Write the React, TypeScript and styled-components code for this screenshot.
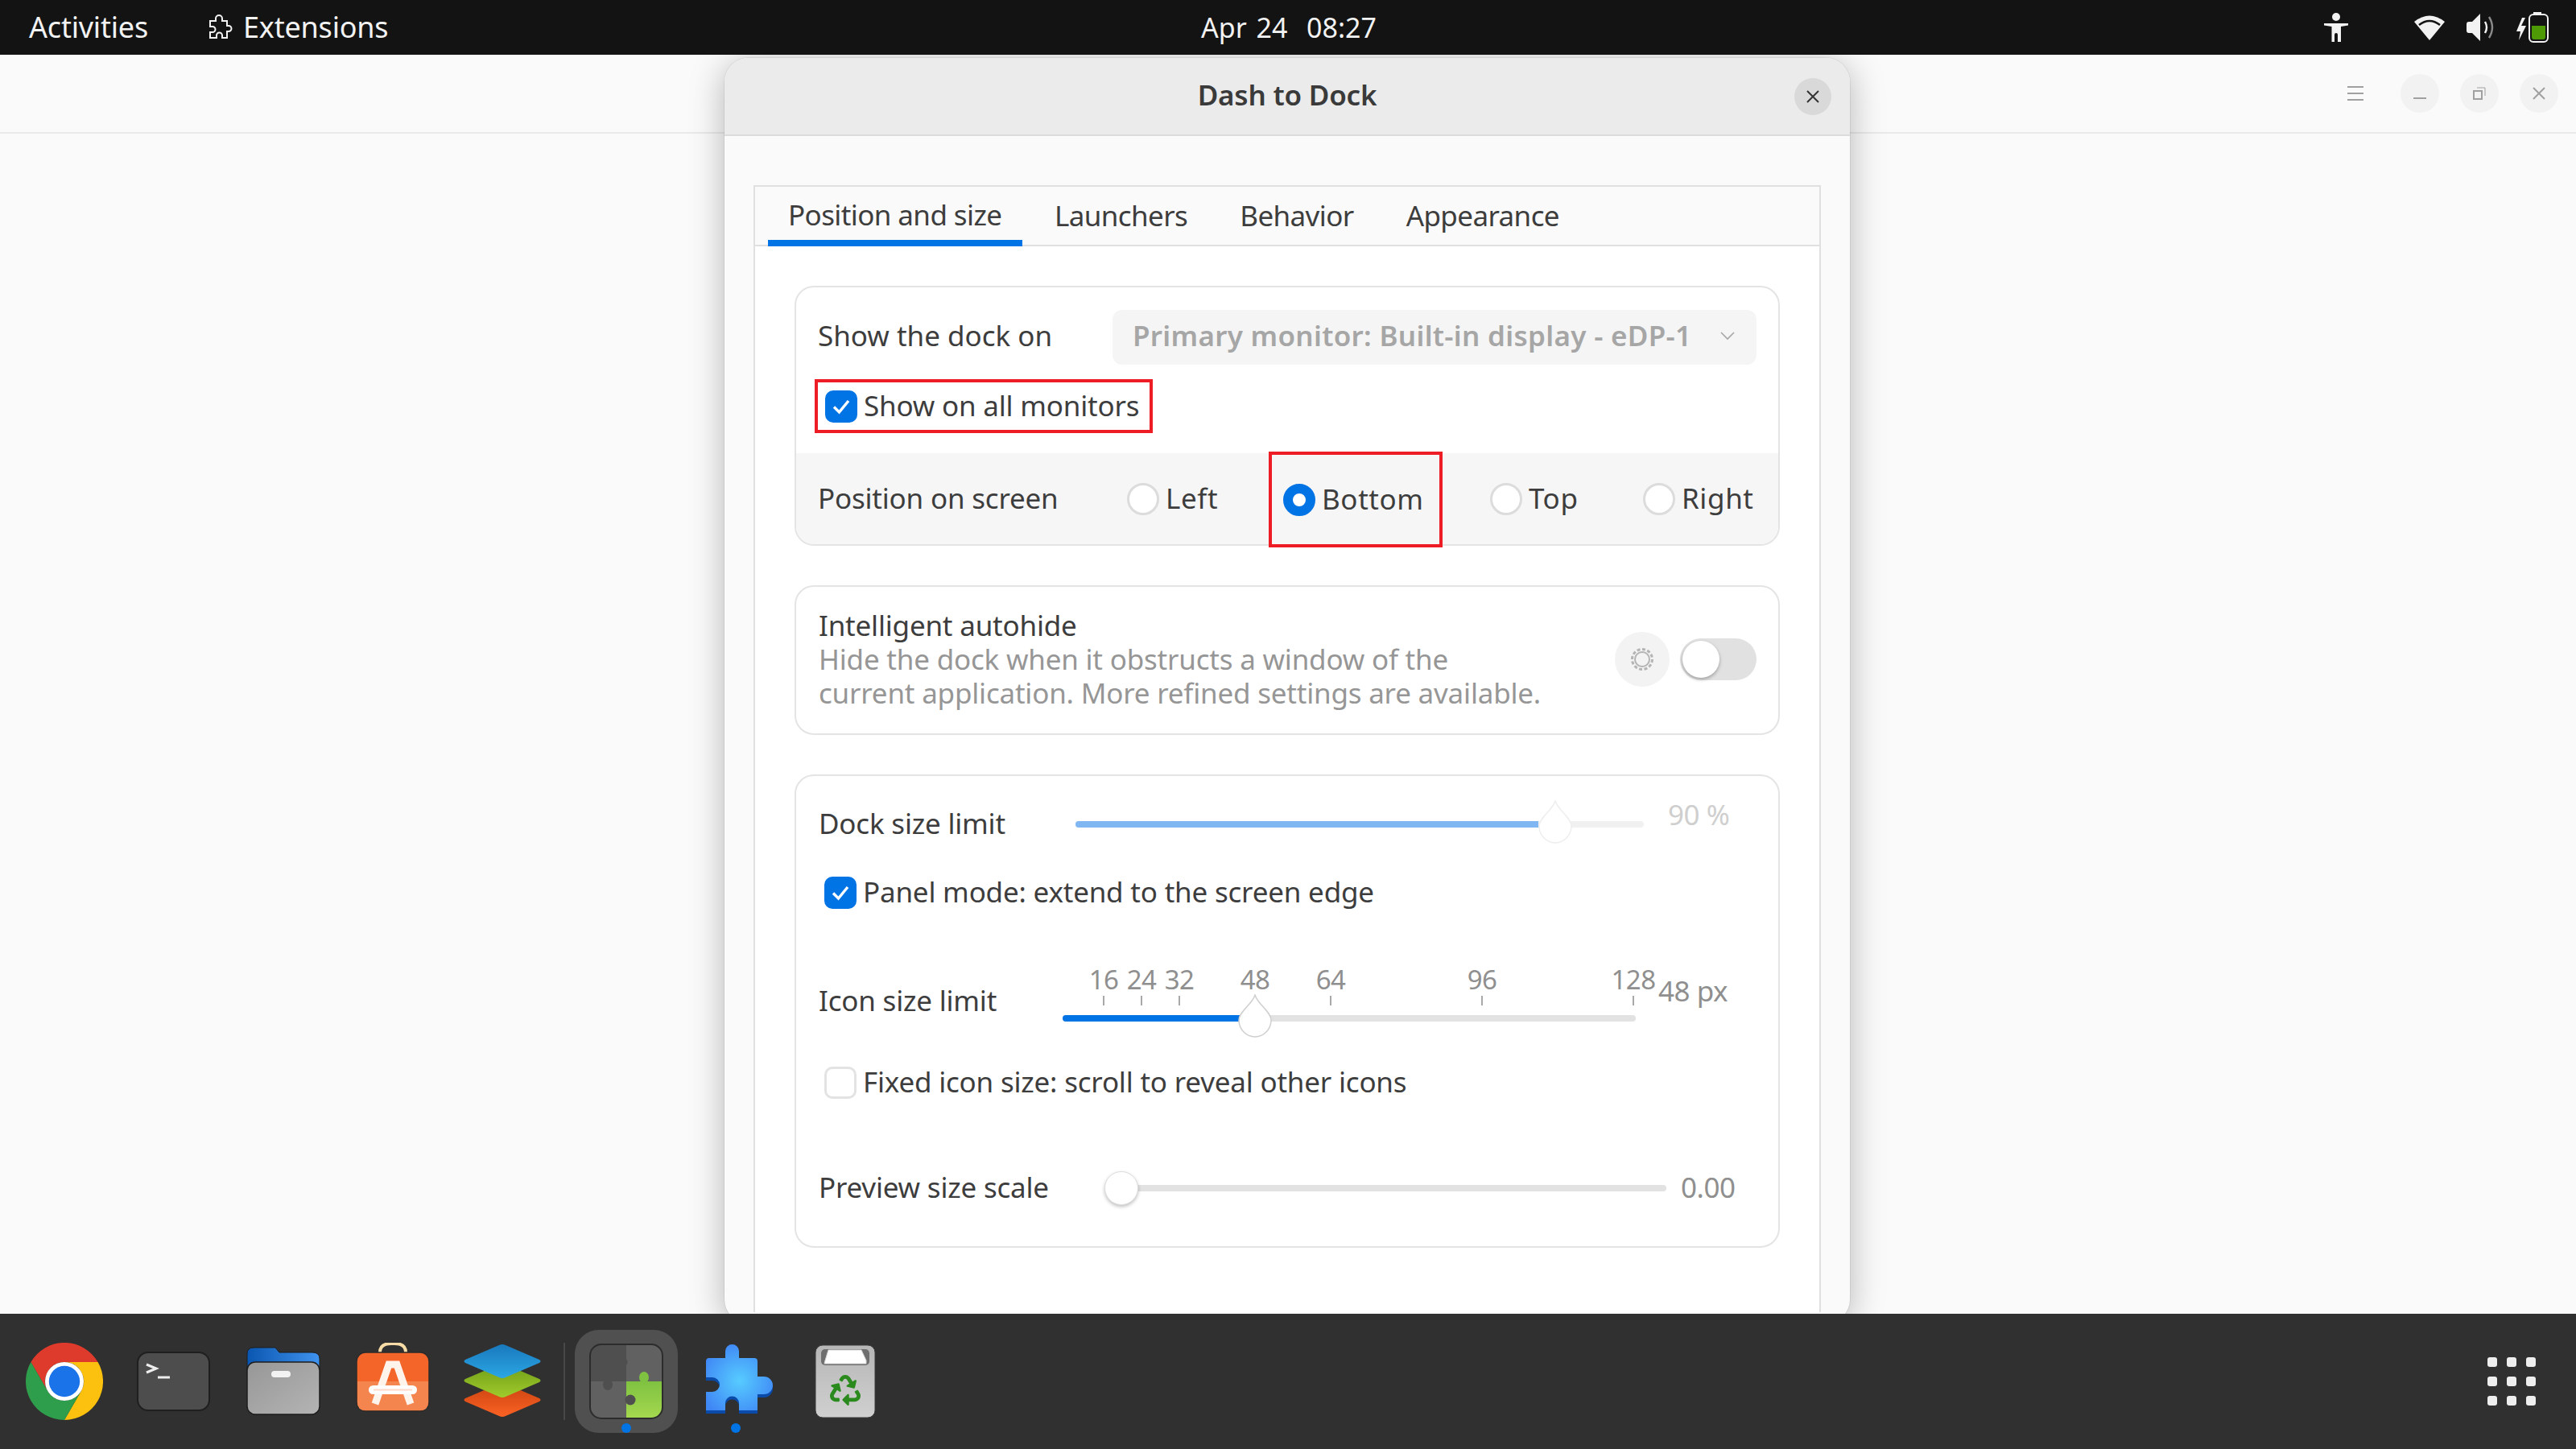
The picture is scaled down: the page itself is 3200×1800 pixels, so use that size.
import React from 'react'
import styled, { createGlobalStyle } from 'styled-components'
import { FaRecycle } from 'react-icons/fa'

const GlobalStyle = createGlobalStyle`
  html, body { margin: 0; padding: 0; background: #fafafa; }
  * { box-sizing: border-box; }
  body { font-family: "Noto Sans", "Open Sans", sans-serif; color: #3d3d3d; }
`

const Desktop = styled.div`
  position: relative;
  width: 3200px;
  height: 1800px;
  overflow: hidden;
  display: grid;
  grid-template-rows: 68px 1fr 168px;
`

const TopBar = styled.div`
  display: grid;
  grid-template-columns: 1fr auto 1fr;
  align-items: center;
  background: #131313;
  color: #f2f2f2;
  font-size: 36px;
  padding: 0 34px 0 36px;
  z-index: 3;
`
const TopLeft = styled.div`
  display: flex;
  align-items: center;
`
const TopItem = styled.span<{ $gap?: number }>`
  display: flex;
  align-items: center;
  gap: 13px;
  margin-left: ${(p) => p.$gap || 0}px;
  letter-spacing: -0.2px;
  padding-bottom: 2px;
`
const Clock = styled.div`
  font-size: 34px;
  word-spacing: 3px;
`
const TopRight = styled.div`
  display: flex;
  justify-content: flex-end;
  align-items: center;
`
const StatusIcon = styled.svg<{ $left?: number }>`
  display: block;
  margin-left: ${(p) => p.$left || 0}px;
`

const BackWindow = styled.div`
  background: #fafafa;
`
const BackHeader = styled.div`
  height: 98px;
  border-bottom: 2px solid #e9e9e9;
  display: flex;
  align-items: center;
  justify-content: flex-end;
  padding-right: 22px;
  gap: 26px;
`
const Hamburger = styled.div`
  width: 20px;
  height: 18px;
  margin-right: 20px;
  border-top: 2px solid #a0a0a0;
  border-bottom: 2px solid #a0a0a0;
  position: relative;
  &::after {
    content: '';
    position: absolute;
    left: 0;
    right: 0;
    top: 6px;
    height: 2px;
    background: #a0a0a0;
  }
`
const WinButton = styled.div`
  width: 48px;
  height: 48px;
  border-radius: 50%;
  background: #f2f2f2;
  display: flex;
  align-items: center;
  justify-content: center;
`

const Dialog = styled.div`
  position: absolute;
  left: 900px;
  top: 72px;
  width: 1398px;
  height: 1572px;
  background: #fafafa;
  border-radius: 30px;
  box-shadow: 0 6px 44px rgba(0, 0, 0, 0.28), 0 0 0 1px rgba(0, 0, 0, 0.06);
  overflow: hidden;
  z-index: 1;
`
const DialogHeader = styled.div`
  height: 97px;
  background: #ebebeb;
  border-bottom: 2px solid #dcdcdc;
  display: flex;
  align-items: center;
  justify-content: center;
  position: relative;
`
const DialogTitle = styled.div`
  font-size: 35px;
  font-weight: 600;
  letter-spacing: -0.2px;
  color: #3a3a3a;
  padding-bottom: 4px;
`
const CloseButton = styled.div`
  position: absolute;
  right: 23px;
  top: 25px;
  width: 46px;
  height: 46px;
  border-radius: 50%;
  background: #d9d9d9;
  display: flex;
  align-items: center;
  justify-content: center;
`
const DialogBody = styled.div`
  padding: 61px 36px 0;
`
const Notebook = styled.div`
  border: 2px solid #e0e0e0;
  border-bottom: none;
  background: #fff;
  height: 1400px;
`
const TabBar = styled.div`
  display: flex;
  height: 74px;
  background: #fafafa;
  border-bottom: 2px solid #e0e0e0;
  padding-left: 16px;
  gap: 15px;
`
const Tab = styled.div<{ $active?: boolean }>`
  display: flex;
  align-items: center;
  height: 74px;
  padding: 0 25px 4px;
  font-size: 35px;
  letter-spacing: -0.6px;
  min-width: ${(p) => (p.$active ? '316px' : '0')};
  border-bottom: ${(p) => (p.$active ? '8px solid #0073e5' : 'none')};
  padding-top: ${(p) => (p.$active ? '6px' : '0')};
`
const Content = styled.div`
  padding: 49px 49px 0;
  display: flex;
  flex-direction: column;
  gap: 49px;
`
const Card = styled.div`
  border: 2px solid #e4e4e4;
  border-radius: 24px;
  background: #fff;
`
const Label = styled.div<{ $w?: number }>`
  font-size: 35px;
  letter-spacing: -0.2px;
  white-space: nowrap;
  padding-bottom: 3px;
  width: ${(p) => (p.$w ? `${p.$w}px` : 'auto')};
  flex: none;
`
const RadioLabel = styled(Label)`
  letter-spacing: 0.6px;
`
const ComboRow = styled.div`
  display: flex;
  align-items: center;
  justify-content: space-between;
  padding: 28px 27px 0 27px;
`
const ComboLabel = styled(Label)`
  padding-bottom: 6px;
  letter-spacing: 0;
`
const Combo = styled.div`
  width: 800px;
  height: 68px;
  background: #f5f5f5;
  border-radius: 12px;
  display: flex;
  align-items: center;
  justify-content: space-between;
  padding: 0 26px 5px 25px;
  font-size: 35px;
  font-weight: 600;
  letter-spacing: 0.3px;
  color: #a6a6a6;
`
const RedBox = styled.div`
  border: 4px solid #ee1c25;
  display: flex;
  align-items: center;
`
const ShowAllBox = styled(RedBox)`
  width: 420px;
  height: 67px;
  margin: 18px 0 25px 23px;
  padding-left: 9px;
  gap: 8px;
`
const PositionRow = styled.div`
  display: grid;
  grid-template-columns: 384px 176px 216px 249px auto;
  align-items: center;
  height: 113px;
  background: #f6f6f6;
  border-radius: 0 0 22px 22px;
  padding-left: 27px;
`
const RadioItem = styled.div<{ $pad?: number }>`
  display: flex;
  align-items: center;
  gap: 8px;
  padding-left: ${(p) => p.$pad || 0}px;
`
const BottomBox = styled(RedBox)`
  height: 119px;
  margin: -2px 0 -4px;
  padding-left: 14px;
  gap: 8px;
  position: relative;
`
const Radio = styled.div<{ $on?: boolean }>`
  width: 40px;
  height: 40px;
  border-radius: 50%;
  flex: none;
  background: #fff;
  border: ${(p) => (p.$on ? '12px solid #0073e5' : '3px solid #dcdcdc')};
`
const Check = styled.div<{ $on?: boolean }>`
  width: 40px;
  height: 40px;
  border-radius: 10px;
  flex: none;
  display: flex;
  align-items: center;
  justify-content: center;
  background: ${(p) => (p.$on ? '#0073e5' : '#fff')};
  border: ${(p) => (p.$on ? 'none' : '3px solid #e3e3e3')};
`
const AutohideCard = styled(Card)`
  display: flex;
  align-items: center;
  padding: 27px 27px 29px 28px;
`
const AutoText = styled.div`
  flex: 1;
  font-size: 35px;
  line-height: 42px;
  letter-spacing: -0.2px;
`
const Muted = styled.div`
  color: #969696;
`
const GearButton = styled.div`
  width: 68px;
  height: 68px;
  border-radius: 50%;
  background: #f3f3f3;
  display: flex;
  align-items: center;
  justify-content: center;
  margin-right: 13px;
`
const Switch = styled.div`
  width: 95px;
  height: 52px;
  border-radius: 26px;
  background: #e1e1e1;
  padding: 3px;
`
const SwitchKnob = styled.div`
  width: 46px;
  height: 46px;
  border-radius: 50%;
  background: #fff;
  box-shadow: 0 2px 4px rgba(0, 0, 0, 0.3);
`
const SliderCard = styled(Card)`
  padding-bottom: 22px;
`
const Row = styled.div<{ $h: number; $top?: number }>`
  display: flex;
  align-items: center;
  height: ${(p) => p.$h}px;
  margin-top: ${(p) => p.$top || 0}px;
  padding-left: 28px;
`
const CheckRow = styled(Row)`
  padding-left: 35px;
  gap: 8px;
`
const SliderBox = styled.div<{ $w: number; $drop?: number }>`
  position: relative;
  width: ${(p) => p.$w}px;
  height: 8px;
  flex: none;
  border-radius: 4px;
  margin-top: ${(p) => p.$drop || 0}px;
  background: #e2e2e2;
`
const SliderBoxFaint = styled(SliderBox)`
  background: #f1f1f1;
`
const SliderFill = styled.div<{ $faded?: boolean }>`
  height: 8px;
  border-radius: 4px 0 0 4px;
  background: ${(p) => (p.$faded ? '#80b7f3' : '#0073e5')};
`
const KnobDrop = styled.svg`
  position: absolute;
  top: -26px;
  transform: translateX(-22px);
`
const RoundKnob = styled.div`
  position: absolute;
  left: -4px;
  top: -17px;
  width: 42px;
  height: 42px;
  border-radius: 50%;
  background: #fff;
  border: 1px solid #dedede;
  box-shadow: 0 2px 4px rgba(0, 0, 0, 0.25);
`
const Mark = styled.div`
  position: absolute;
  top: -24px;
  width: 2px;
  height: 12px;
  background: #a8a8a8;
`
const MarkText = styled.span`
  position: absolute;
  top: -21px;
  left: 1px;
  transform: translate(-50%, -50%);
  font-size: 33px;
  letter-spacing: -0.6px;
  color: #8f8f8f;
`
const Value = styled.div<{ $left: number; $shift: number; $faint?: boolean }>`
  margin-left: ${(p) => p.$left}px;
  margin-top: ${(p) => p.$shift}px;
  font-size: 35px;
  letter-spacing: -0.5px;
  white-space: nowrap;
  color: ${(p) => (p.$faint ? '#cfcfcf' : '#8f8f8f')};
`

const Dock = styled.div`
  background: #303030;
  display: flex;
  align-items: center;
  padding-left: 12px;
  z-index: 2;
`
const Slot = styled.div`
  position: relative;
  width: 136px;
  height: 168px;
  display: flex;
  align-items: center;
  justify-content: center;
  flex: none;
`
const ActiveTile = styled.div`
  width: 128px;
  height: 128px;
  border-radius: 30px;
  background: #505050;
  display: flex;
  align-items: center;
  justify-content: center;
`
const RunDot = styled.div`
  position: absolute;
  left: 62px;
  bottom: 20px;
  width: 12px;
  height: 12px;
  border-radius: 50%;
  background: #0073e5;
`
const Separator = styled.div`
  width: 2px;
  height: 96px;
  margin: 0 8px;
  background: #484848;
  flex: none;
`
const AppGrid = styled.div`
  margin-left: auto;
  margin-right: 50px;
  display: grid;
  grid-template-columns: repeat(3, 12px);
  grid-auto-rows: 12px;
  gap: 12px;
`
const AppDot = styled.div`
  background: #eeeeee;
  border-radius: 3px;
`

const CheckMark = () => (
  <svg width="24" height="24" viewBox="0 0 24 24" fill="none" stroke="#fff" strokeWidth="3.4">
    <path d="M3 12.5 L9.5 19 L21 5" />
  </svg>
)

const ExtensionsGlyph = () => (
  <svg width="30" height="32" viewBox="0 0 30 32" fill="none" stroke="#f2f2f2" strokeWidth="2">
    <path d="M2 9 H9 V6 a4 4 0 0 1 8 0 V9 H23 V15 H25 a3.5 3.5 0 0 1 0 7 H23 V30 H17 V27 a3.5 3.5 0 0 0 -7 0 V30 H2 V23 H5 a3.5 3.5 0 0 0 0 -7 H2Z" />
  </svg>
)

const AccessibilityGlyph = () => (
  <StatusIcon width="30" height="36" viewBox="0 0 30 36" fill="#f2f2f2">
    <circle cx="15" cy="5" r="5" />
    <path d="M0 13 H30 V15.5 L21 17 V36 H17 V27 A2 2 0 0 0 13 27 V36 H9.5 V17 L0 15.5Z" />
  </StatusIcon>
)

const WifiGlyph = () => (
  <StatusIcon $left={82} width="38" height="32" viewBox="0 0 38 32">
    <path d="M19 32 L0 9 Q19 -6 38 9Z" fill="#f2f2f2" />
    <path d="M6 13 Q19 3 32 13" fill="none" stroke="#131313" strokeWidth="2.6" />
  </StatusIcon>
)

const VolumeGlyph = () => (
  <StatusIcon $left={27} width="36" height="36" viewBox="0 0 36 36" fill="none">
    <path d="M0 14 Q0 11 3 11 H7 L17 1 V35 L7 25 H3 Q0 25 0 22Z" fill="#f2f2f2" />
    <path d="M23 11 Q27 18 23 25" stroke="#f2f2f2" strokeWidth="2.4" />
    <path d="M28 5 Q36 18 28 31" stroke="#8a8a8a" strokeWidth="2.4" />
  </StatusIcon>
)

const BatteryGlyph = () => (
  <StatusIcon $left={26} width="40" height="38" viewBox="0 0 40 38" fill="none">
    <path d="M7 7 L0 24 H5 L3 35 L12 17 H6 L11 7Z" fill="#f2f2f2" />
    <path d="M21 0 H31 V3 H21Z" fill="#f2f2f2" />
    <rect x="16" y="3" width="23" height="34" rx="5" stroke="#f2f2f2" strokeWidth="2" />
    <path d="M19 17 H36 V31 Q36 34 33 34 H22 Q19 34 19 31Z" fill="#4e9a06" />
  </StatusIcon>
)

const ChromeIcon = () => (
  <svg width="96" height="96" viewBox="0 0 48 48">
    <path d="M24 12 H44.8 A24 24 0 0 0 3.2 12 L13.6 30 A12 12 0 0 1 24 12Z" fill="#df3b2d" />
    <path d="M24 12 H44.8 A24 24 0 0 1 24 48 L34.4 30 A12 12 0 0 0 24 12Z" fill="#fcc10e" />
    <path d="M3.2 12 A24 24 0 0 0 24 48 L34.4 30 A12 12 0 0 1 13.6 30Z" fill="#2f9e4c" />
    <circle cx="24" cy="24" r="12" fill="#fff" />
    <circle cx="24" cy="24" r="9.6" fill="#1a73e8" />
  </svg>
)

const TerminalIcon = () => (
  <svg width="96" height="96" viewBox="0 0 96 96" fill="none">
    <rect x="3" y="12" width="89" height="72" rx="13" fill="#4d4d4d" stroke="#1f1f1f" strokeWidth="2" />
    <path d="M14 27 L26 32 L14 37" stroke="#eee" strokeWidth="3" />
    <path d="M28 43 H43" stroke="#eee" strokeWidth="3" />
  </svg>
)

const FilesIcon = () => (
  <svg width="96" height="96" viewBox="0 0 96 96">
    <defs>
      <linearGradient id="filesTab" x1="0" y1="0" x2="1" y2="0">
        <stop offset="0" stopColor="#0a56b0" />
        <stop offset="1" stopColor="#3f93ee" />
      </linearGradient>
      <linearGradient id="filesBody" x1="0" y1="0" x2="1" y2="1">
        <stop offset="0" stopColor="#979797" />
        <stop offset="1" stopColor="#b4b4b4" />
      </linearGradient>
    </defs>
    <path d="M3 40 V14 Q3 6 11 6 H38 L43 12 H84 Q93 12 93 20 V40Z" fill="url(#filesTab)" stroke="#1d1d1d" strokeWidth="1" />
    <rect x="3" y="24" width="90" height="65" rx="10" fill="url(#filesBody)" stroke="#1d1d1d" strokeWidth="1.5" />
    <rect x="33" y="35" width="24" height="8" rx="4" fill="#f2f2f2" />
  </svg>
)

const StoreIcon = () => (
  <svg width="96" height="96" viewBox="0 0 96 96" fill="none">
    <path d="M32 18 V12 Q32 1 46 1 H50 Q64 1 64 12 V18" stroke="#f8dca8" strokeWidth="4" />
    <rect x="3" y="12" width="90" height="73" rx="11" fill="#f4652a" stroke="#2b2b2b" strokeWidth="1.5" />
    <path d="M4 48 H92 V74 Q92 84 82 84 H14 Q4 84 4 74Z" fill="#f5854f" />
    <path d="M26 76 L43 27 H53 L70 76" stroke="#fff4ec" strokeWidth="9" />
    <rect x="18" y="53" width="60" height="11" rx="5.5" fill="#fff" />
    <path d="M24 58.5 H72" stroke="#ffd8c8" strokeWidth="2" />
  </svg>
)

const LayersIcon = () => (
  <svg width="96" height="96" viewBox="0 0 96 96">
    <defs>
      <linearGradient id="layerOrange" x1="0" y1="0" x2="0" y2="1">
        <stop offset="0" stopColor="#c9420f" />
        <stop offset="1" stopColor="#fb6224" />
      </linearGradient>
      <linearGradient id="layerGreen" x1="0" y1="0" x2="0" y2="1">
        <stop offset="0" stopColor="#6f9c18" />
        <stop offset="1" stopColor="#a0cb2c" />
      </linearGradient>
      <linearGradient id="layerBlue" x1="0" y1="0" x2="0" y2="1">
        <stop offset="0" stopColor="#1979bd" />
        <stop offset="1" stopColor="#2ba6e4" />
      </linearGradient>
    </defs>
    <path d="M44 51 Q48 49 52 51 L94 69 Q97 71 94 73 L52 91 Q48 93 44 91 L2 73 Q-1 71 2 69Z" fill="url(#layerOrange)" />
    <path d="M44 27 Q48 25 52 27 L94 45 Q97 47 94 49 L52 67 Q48 69 44 67 L2 49 Q-1 47 2 45Z" fill="url(#layerGreen)" />
    <path d="M44 3 Q48 1 52 3 L94 21 Q97 23 94 25 L52 43 Q48 45 44 43 L2 25 Q-1 23 2 21Z" fill="url(#layerBlue)" />
  </svg>
)

const ExtManagerIcon = () => (
  <svg width="96" height="96" viewBox="0 0 96 96">
    <defs>
      <clipPath id="extClip">
        <rect x="3" y="2" width="90" height="92" rx="14" />
      </clipPath>
      <linearGradient id="extGreen" x1="0" y1="0" x2="0" y2="1">
        <stop offset="0" stopColor="#7fc241" />
        <stop offset="1" stopColor="#a5d84f" />
      </linearGradient>
    </defs>
    <g clipPath="url(#extClip)">
      <rect x="3" y="2" width="45" height="46" fill="#4f4f4f" />
      <rect x="48" y="2" width="45" height="46" fill="#616161" />
      <rect x="3" y="48" width="45" height="46" fill="#616161" />
      <rect x="48" y="48" width="45" height="46" fill="url(#extGreen)" />
      <circle cx="43" cy="24" r="6.5" fill="#4f4f4f" />
      <ellipse cx="25" cy="52" rx="6" ry="7" fill="#4f4f4f" />
      <circle cx="53" cy="71" r="6.5" fill="#4f4f4f" />
      <ellipse cx="70" cy="43" rx="6" ry="7" fill="#7fc241" />
    </g>
    <rect x="3" y="2" width="90" height="92" rx="14" fill="none" stroke="#2c2c2c" strokeWidth="2" />
  </svg>
)

const puzzlePath =
  'M4 17 H24 V8.5 A8.5 8.5 0 0 1 41 8.5 V17 H60 Q64 17 64 21 V40 H72 A11 11 0 0 1 72 62 H64 V82 H41 V73 A8.5 8.5 0 0 0 24 73 V82 H0 V59 H8 A9 9 0 0 0 8 41 H0 V21 Q0 17 4 17Z'

const PuzzleIcon = () => (
  <svg width="96" height="96" viewBox="0 0 96 96">
    <defs>
      <radialGradient id="puzzleFill" cx="0.5" cy="0.55" r="0.6">
        <stop offset="0" stopColor="#57ccff" />
        <stop offset="1" stopColor="#3f86f5" />
      </radialGradient>
    </defs>
    <g transform="translate(11 2)">
      <path d={puzzlePath} transform="translate(0 4)" fill="#0a4aa8" />
      <path d={puzzlePath} fill="url(#puzzleFill)" />
    </g>
  </svg>
)

const TrashIcon = () => (
  <svg width="96" height="96" viewBox="0 0 96 96">
    <defs>
      <linearGradient id="trashFill" x1="0" y1="0" x2="0" y2="1">
        <stop offset="0" stopColor="#b6b6b6" />
        <stop offset="1" stopColor="#d0d0d0" />
      </linearGradient>
    </defs>
    <rect x="11" y="3" width="74" height="90" rx="9" fill="url(#trashFill)" stroke="#3a3a3a" strokeWidth="1" />
    <rect x="18" y="8" width="60" height="20" rx="5" fill="#6f6f6f" />
    <path d="M23 22 L27 9 H68 L74 22 V26 H22Z" fill="#fff" stroke="#d5d5d5" strokeWidth="1" />
    <FaRecycle x="29" y="40" size={38} color="#2a8a1e" />
  </svg>
)

const iconMarks = [16, 24, 32, 48, 64, 96, 128]
const markLeft = (size: number) => 51 + (size - 16) * 5.875

const App = () => {
  return (
    <Desktop>
      <GlobalStyle />
      <TopBar>
        <TopLeft>
          <TopItem>Activities</TopItem>
          <TopItem $gap={75}>
            <ExtensionsGlyph />
            Extensions
          </TopItem>
        </TopLeft>
        <Clock>Apr 24&nbsp; 08:27</Clock>
        <TopRight>
          <AccessibilityGlyph />
          <WifiGlyph />
          <VolumeGlyph />
          <BatteryGlyph />
        </TopRight>
      </TopBar>

      <BackWindow>
        <BackHeader>
          <Hamburger />
          <WinButton>
            <svg width="16" height="16" viewBox="0 0 16 16">
              <path d="M0 14 H16" stroke="#a0a0a0" strokeWidth="2" />
            </svg>
          </WinButton>
          <WinButton>
            <svg width="16" height="16" viewBox="0 0 16 16" fill="none" stroke="#a0a0a0">
              <rect x="1" y="5" width="10" height="10" strokeWidth="2" />
              <path d="M5 1 H15 V11" strokeWidth="1" />
            </svg>
          </WinButton>
          <WinButton>
            <svg width="16" height="16" viewBox="0 0 16 16">
              <path d="M1 1 L15 15 M15 1 L1 15" stroke="#a0a0a0" strokeWidth="2" />
            </svg>
          </WinButton>
        </BackHeader>
      </BackWindow>

      <Dialog>
        <DialogHeader>
          <DialogTitle>Dash to Dock</DialogTitle>
          <CloseButton>
            <svg width="16" height="16" viewBox="0 0 16 16">
              <path d="M1 1 L15 15 M15 1 L1 15" stroke="#333" strokeWidth="2" />
            </svg>
          </CloseButton>
        </DialogHeader>
        <DialogBody>
          <Notebook>
            <TabBar>
              <Tab $active>Position and size</Tab>
              <Tab>Launchers</Tab>
              <Tab>Behavior</Tab>
              <Tab>Appearance</Tab>
            </TabBar>
            <Content>
              <Card>
                <ComboRow>
                  <ComboLabel>Show the dock on</ComboLabel>
                  <Combo>
                    Primary monitor: Built-in display - eDP-1
                    <svg width="20" height="12" viewBox="0 0 20 12" fill="none" stroke="#a6a6a6" strokeWidth="1.6">
                      <path d="M2 2 L10 10 L18 2" />
                    </svg>
                  </Combo>
                </ComboRow>
                <ShowAllBox>
                  <Check $on>
                    <CheckMark />
                  </Check>
                  <Label>Show on all monitors</Label>
                </ShowAllBox>
                <PositionRow>
                  <Label>Position on screen</Label>
                  <RadioItem>
                    <Radio />
                    <RadioLabel>Left</RadioLabel>
                  </RadioItem>
                  <BottomBox>
                    <Radio $on />
                    <RadioLabel>Bottom</RadioLabel>
                  </BottomBox>
                  <RadioItem $pad={59}>
                    <Radio />
                    <RadioLabel>Top</RadioLabel>
                  </RadioItem>
                  <RadioItem>
                    <Radio />
                    <RadioLabel>Right</RadioLabel>
                  </RadioItem>
                </PositionRow>
              </Card>

              <AutohideCard>
                <AutoText>
                  Intelligent autohide
                  <Muted>
                    Hide the dock when it obstructs a window of the
                    <br />
                    current application. More refined settings are available.
                  </Muted>
                </AutoText>
                <GearButton>
                  <svg width="30" height="34" viewBox="0 0 30 34" fill="none" stroke="#b4b4b4">
                    <circle cx="15" cy="17" r="9" strokeWidth="2" />
                    <circle cx="15" cy="17" r="12.5" strokeWidth="3" strokeDasharray="4 2.5" />
                  </svg>
                </GearButton>
                <Switch>
                  <SwitchKnob />
                </Switch>
              </AutohideCard>

              <SliderCard>
                <Row $h={120}>
                  <Label $w={319}>Dock size limit</Label>
                  <SliderBoxFaint $w={706}>
                    <SliderFill $faded style={{ width: `${(575 / 706) * 100}%` }} />
                    <KnobDrop width="44" height="56" viewBox="0 0 44 56" style={{ left: 596 }}>
                      <path
                        d="M22 1 C25 12 42 22 42 32 A20 21 0 0 1 2 32 C2 22 19 12 22 1Z"
                        fill="#fff"
                        stroke="#eeeeee"
                        strokeWidth="1.5"
                      />
                    </KnobDrop>
                  </SliderBoxFaint>
                  <Value $left={30} $shift={-26} $faint>
                    90 %
                  </Value>
                </Row>
                <CheckRow $h={50}>
                  <Check $on>
                    <CheckMark />
                  </Check>
                  <Label>Panel mode: extend to the screen edge</Label>
                </CheckRow>
                <Row $h={154} $top={33}>
                  <Label $w={303}>Icon size limit</Label>
                  <SliderBox $w={712} $drop={42}>
                    <SliderFill style={{ width: markLeft(48) - 10 }} />
                    {iconMarks.map((size) => (
                      <Mark key={size} style={{ left: markLeft(size) - 1 }}>
                        <MarkText>{size}</MarkText>
                      </Mark>
                    ))}
                    <KnobDrop width="44" height="56" viewBox="0 0 44 56" style={{ left: markLeft(48) }}>
                      <path
                        d="M22 1 C25 12 42 22 42 32 A20 21 0 0 1 2 32 C2 22 19 12 22 1Z"
                        fill="#fff"
                        stroke="#cfcfcf"
                        strokeWidth="1.5"
                      />
                    </KnobDrop>
                  </SliderBox>
                  <Value $left={28} $shift={-28}>
                    48 px
                  </Value>
                </Row>
                <CheckRow $h={48}>
                  <Check />
                  <Label>Fixed icon size: scroll to reveal other icons</Label>
                </CheckRow>
                <Row $h={100} $top={57}>
                  <Label $w={359}>Preview size scale</Label>
                  <SliderBox $w={694}>
                    <RoundKnob />
                  </SliderBox>
                  <Value $left={18} $shift={-4}>
                    0.00
                  </Value>
                </Row>
              </SliderCard>
            </Content>
          </Notebook>
        </DialogBody>
      </Dialog>

      <div />

      <Dock>
        <Slot>
          <ChromeIcon />
        </Slot>
        <Slot>
          <TerminalIcon />
        </Slot>
        <Slot>
          <FilesIcon />
        </Slot>
        <Slot>
          <StoreIcon />
        </Slot>
        <Slot>
          <LayersIcon />
        </Slot>
        <Separator />
        <Slot>
          <ActiveTile>
            <ExtManagerIcon />
          </ActiveTile>
          <RunDot />
        </Slot>
        <Slot>
          <PuzzleIcon />
          <RunDot />
        </Slot>
        <Slot>
          <TrashIcon />
        </Slot>
        <AppGrid>
          {Array.from({ length: 9 }).map((_, i) => (
            <AppDot key={i} />
          ))}
        </AppGrid>
      </Dock>
    </Desktop>
  )
}

export default App
